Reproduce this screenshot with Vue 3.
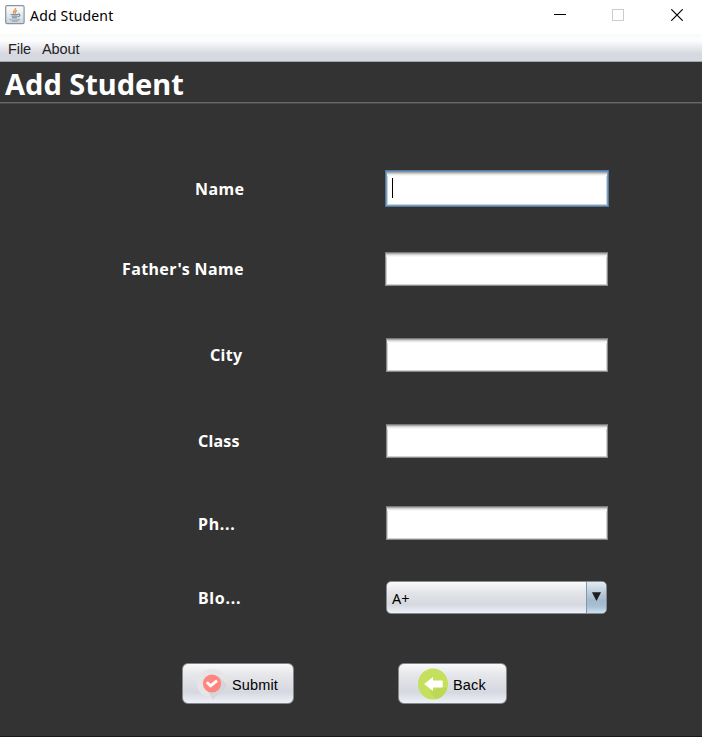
<script setup>
import { ref } from 'vue'

const menus = ['File', 'About']
const fields = [
  { id: 'name', label: 'Name' },
  { id: 'father', label: "Father's Name" },
  { id: 'city', label: 'City' },
  { id: 'class', label: 'Class' },
  { id: 'phone', label: 'Ph...' },
]
const blood = ref('A+')
</script>

<template>
  <div class="window">
    <header class="titlebar">
      <svg class="app-icon" width="20" height="20" viewBox="0 0 20 20">
        <defs>
          <linearGradient id="tile" x1="0" y1="0" x2="0" y2="1">
            <stop offset="0" stop-color="#fff" />
            <stop offset="1" stop-color="#cfd3d6" />
          </linearGradient>
        </defs>
        <rect x=".7" y=".7" width="18.4" height="18" rx="1.5" fill="url(#tile)" stroke="#8495a4" stroke-width="1.2" />
        <path d="M10.5 3c.8 2-3.500 3.100-1.500 5.600M12 5.500c-2 1-2.400 1.800-1.200 3" fill="none" stroke="#e99a5c" stroke-width="1.400" />
        <path d="M5.500 9.500h7.500M6.500 11.200h6M7 12.800h5M12.800 9.300c3-.9 2.800 2-.2 2.700" fill="none" stroke="#7592aa" stroke-width="1.200" />
        <path d="M4.500 14.300c2 1.300 8 1.200 10.500-.1M7 16c3 .4 4.500.2 6.500-.3" fill="none" stroke="#8ba2b5" />
      </svg>
      <span class="window-title">Add Student</span>
      <div class="controls">
        <svg width="12" height="12" viewBox="0 0 12 12"><path d="M0 5.5h12" stroke="#000" /></svg>
        <svg width="12" height="12" viewBox="0 0 12 12"><rect x=".5" y=".5" width="11" height="11" fill="none" stroke="#ccc" /></svg>
        <svg width="12" height="12" viewBox="0 0 12 12"><path d="M.3.3l11.4 11.4M11.7.3L.3 11.7" stroke="#000" stroke-width="1.2" /></svg>
      </div>
    </header>
    <nav class="menubar">
      <span v-for="m in menus" :key="m" :class="m.toLowerCase()">{{ m }}</span>
    </nav>
    <h1 class="heading"><span>Add Student</span></h1>
    <main class="form">
      <div v-for="f in fields" :key="f.id" class="row" :class="f.id">
        <span class="label">{{ f.label }}</span>
        <div class="field"><i v-if="f.id === 'name'" class="caret"></i></div>
      </div>
      <div class="row blood">
        <span class="label">Blo...</span>
        <div class="combo">
          <span class="value">{{ blood }}</span>
          <span class="arrow">
            <svg width="9" height="9" viewBox="0 0 9 9"><path d="M0 .3h9L4.8 8.5h-.6z" fill="#1d1d1d" /></svg>
          </span>
        </div>
      </div>
      <div class="actions">
        <button class="btn submit">
          <svg width="30" height="32" viewBox="0 0 30 32">
            <path d="M15 1C6 1 0 7.5 0 15.500c0 5 2.500 9 6 11.500 4 1 7 2 9.500 4.500C19 28 30 25 30 15.500 30 7 23 1 15 1z" fill="#e5e5e8" />
            <path d="M22 9l8 7c0 7-7 10-11 12l-3 3.500-5-8.500z" fill="#d5d5da" />
            <circle cx="15" cy="15.500" r="9.100" fill="#ff8581" />
            <path d="M9.800 14.300l3.800 3.500 6.400-5.200" fill="none" stroke="#fff" stroke-width="2.900" />
            <path d="M12.500 13.200l1.500 1.500" stroke="#ff8581" />
          </svg>
          <span>Submit</span>
        </button>
        <button class="btn back">
          <svg width="30" height="32" viewBox="0 0 30 32">
            <ellipse cx="15" cy="16" rx="15" ry="15.500" fill="#c5e05c" />
            <path d="M24 19l5 1c-1 6-6 10-11 11l-7-8z" fill="#bdd856" />
            <path d="M6 16l9-7v3.500h9.700v7H15V23z" fill="#fff" />
          </svg>
          <span>Back</span>
        </button>
      </div>
    </main>
  </div>
</template>

<style>
body { margin: 0; overflow: hidden; }
</style>

<style scoped>
* { box-sizing: border-box; }
.window {
  width: 702px;
  height: 737px;
  display: flex;
  flex-direction: column;
  background: #333;
  border-bottom: 1px solid #191919;
  overflow: hidden;
  font-family: "Liberation Sans", Arial, sans-serif;
}
.titlebar {
  height: 34px;
  flex: none;
  display: flex;
  align-items: flex-start;
  background: #fff;
  padding: 5px 19px 0 5px;
}
.window-title {
  font: 14px/22px "Noto Sans", sans-serif;
  margin-left: 5px;
  color: #000;
  letter-spacing: 0.18px;
}
.controls { display: flex; gap: 46px; margin: 4px 0 0 auto; }
.controls svg { display: block; }
.controls svg:nth-child(-n+2) { margin-left: -1px; margin-right: 1px; }
.controls svg:first-child { margin-right: 1px; }
.menubar {
  height: 28px;
  flex: none;
  display: flex;
  padding-left: 8px;
  font-size: 14.5px;
  line-height: 30px;
  color: #232323;
  background: linear-gradient(#f8faf9 0%, #fdfdfe 25%, #e7e8ed 52%, #d6d8df 75%, #d8dae1 100%);
  border-bottom: 1px solid #a1a7b1;
}
.menubar span { letter-spacing: -0.1px; }
.about { margin-left: 11px; }
.heading {
  height: 42px;
  flex: none;
  margin: 0;
  padding-left: 5px;
  font: bold 29px/44px "Noto Sans", sans-serif;
  color: #fff;
  border-bottom: 1px solid #484848;
  box-shadow: inset 0 -1px #686868;
}
.form { display: flex; flex-direction: column; }
.row { display: flex; height: 34px; }
.label {
  width: 386px;
  flex: none;
  padding-left: 198px;
  font: bold 16px/34px "Noto Sans", sans-serif;
  letter-spacing: 0.4px;
  color: #fff;
  white-space: nowrap;
}
.field {
  width: 222px;
  height: 34px;
  background: #fff;
  border: 1px solid #8b8b8b;
  border-top-color: #7a7a7a;
  box-shadow: inset 0 1px #aaa, inset 0 2px #d0d0d0, inset 0 3px #ebebeb, inset 0 4px #f8f8f8, inset 0 0 0 1px #d0d0d0;
}
.name { height: 37px; margin-top: 66px; }
.name .label { width: 385px; padding-left: 195px; line-height: 39px; }
.name .field {
  width: 224px;
  height: 37px;
  padding: 6px 0 0 5px;
  border: 2px solid #789fc4;
  border-top-color: #6f94b6;
  outline: 1px solid #56779a;
  outline-offset: -1px;
  box-shadow: inset 0 1px #a6a9ac, inset 0 2px #cacaca, inset 0 3px #e8e8e8, inset 0 4px #f6f6f6, inset 0 0 0 1px #ccd2d7;
}
.caret { display: block; width: 1px; height: 20px; background: #000; }
.father { margin-top: 45px; }
.father .label { width: 385px; padding-left: 122px; }
.father .field { width: 223px; }
.city { margin-top: 52px; }
.city .label { padding-left: 210px; letter-spacing: 0.3px; }
.class { margin-top: 52px; }
.class .label { letter-spacing: 0.2px; }
.phone { margin-top: 48px; }
.phone .label { letter-spacing: 0.7px; line-height: 36px; }
.blood { margin-top: 41px; }
.blood .label { letter-spacing: 0.7px; }
.combo {
  width: 221px;
  height: 33px;
  display: flex;
  border: 1px solid #878a8e;
  border-radius: 5px;
  overflow: hidden;
  background: linear-gradient(#fafafc, #e3e4e8 35%, #dcdee3 55%, #d5d8df 73%, #eff1f9 100%);
}
.value { flex: 1; padding-left: 5px; font: 14.5px/33px "Noto Sans", sans-serif; color: #000; }
.arrow {
  width: 20px;
  padding: 10px 0 0 5px;
  border-left: 1px solid #7e99af;
  background: linear-gradient(#e3ebf2, #bacbd9 35%, #a2b8cc 60%, #a9c0d3 78%, #cce0ef 100%);
}
.arrow svg { display: block; }
.actions { display: flex; padding: 48px 0 0 182px; }
.btn {
  height: 41px;
  display: flex;
  align-items: center;
  padding: 0 0 0 14px;
  border: 1px solid #85878b;
  border-radius: 6px;
  background: linear-gradient(#fafafc, #e7e8eb 25%, #dddfe4 50%, #d5d8df 72%, #eff1f8 100%);
  font: 14.5px/40px "Liberation Sans", Arial, sans-serif;
  letter-spacing: 0.15px;
  color: #000;
}
.btn span { margin: 2px 0 0 5px; }
.submit { width: 112px; }
.back { width: 109px; margin-left: 104px; padding-left: 19px; }
</style>
